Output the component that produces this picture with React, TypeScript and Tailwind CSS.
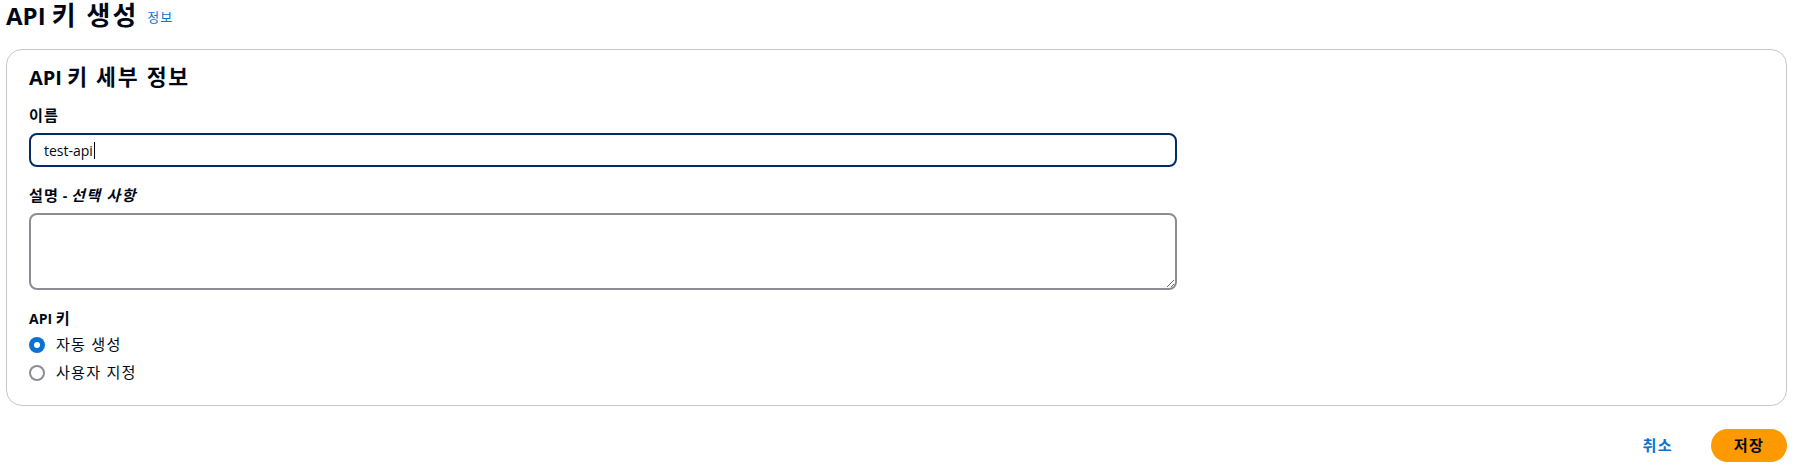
import React from "react";

const font = { fontFamily: '"Open Sans", "Noto Sans CJK KR", sans-serif' };

// Hangul in the reference runs larger and wider than Noto's, so Korean runs get a size bump
function K({ children }: { children: React.ReactNode }) {
  return <span className="text-[1.08em] leading-none tracking-[0.08em]">{children}</span>;
}

function Radio({ checked, label }: { checked?: boolean; label: string }) {
  return (
    <label className="flex h-6 items-center gap-[11px] text-[14px] text-[#000716]">
      {checked ? (
        <span className="flex h-4 w-4 items-center justify-center rounded-full bg-[#0972d3]">
          <span className="h-[6px] w-[6px] rounded-full bg-white" />
        </span>
      ) : (
        <span className="h-4 w-4 rounded-full border-2 border-[#8c8c94] bg-white" />
      )}
      <K>{label}</K>
    </label>
  );
}

export default function App() {
  return (
    <div className="min-h-[473px] bg-white pl-[6px] pr-[17px]" style={font}>
      <div className="flex items-end gap-[9px] pt-[1px]">
        <h1 className="text-[24px] font-bold leading-[30px] text-[#000716]">
          API <K>키 생성</K>
        </h1>
        <a href="#" className="mb-[5px] text-[12px] leading-[16px] text-[#0972d3]">
          <K>정보</K>
        </a>
      </div>

      <section className="mt-[18px] rounded-[16px] border border-[#c6c6cd] px-[22px] pb-[20px] pt-[16px]">
        <h2 className="text-[20px] font-bold leading-[24px] text-[#000716]">
          API <K>키 세부 정보</K>
        </h2>

        <div className="mt-[15px]">
          <div className="text-[14px] font-bold leading-[22px] text-[#000716]">
            <K>이름</K>
          </div>
          <div className="mt-[6px] flex h-[34px] w-[1148px] items-center rounded-[8px] border-2 border-[#032c66] px-[13px] text-[14px] text-[#000716]">
            test-api
            <span className="ml-[1px] h-[17px] w-px bg-[#000716]" />
          </div>
        </div>

        <div className="mt-[18px]">
          <div className="text-[14px] font-bold leading-[22px] text-[#000716]">
            <K>설명</K> - <i><K>선택 사항</K></i>
          </div>
          <textarea className="mt-[6px] block h-[77px] w-[1148px] rounded-[8px] border-2 border-[#8c8c94] px-[13px] py-[4px] text-[14px] outline-none" />
        </div>

        <div className="mt-[18px]">
          <div className="text-[14px] font-bold leading-[22px] text-[#000716]">
            API <K>키</K>
          </div>
          <div className="mt-[3px] flex flex-col gap-[4px]">
            <Radio checked label="자동 생성" />
            <Radio label="사용자 지정" />
          </div>
        </div>
      </section>

      <div className="mt-[23px] flex items-center justify-end gap-[38px]">
        <button className="text-[14px] font-bold text-[#0972d3]">
          <K>취소</K>
        </button>
        <button className="h-[33px] rounded-full bg-[#ff9900] px-[23px] text-[14px] font-bold text-[#000716]">
          <K>저장</K>
        </button>
      </div>
    </div>
  );
}
